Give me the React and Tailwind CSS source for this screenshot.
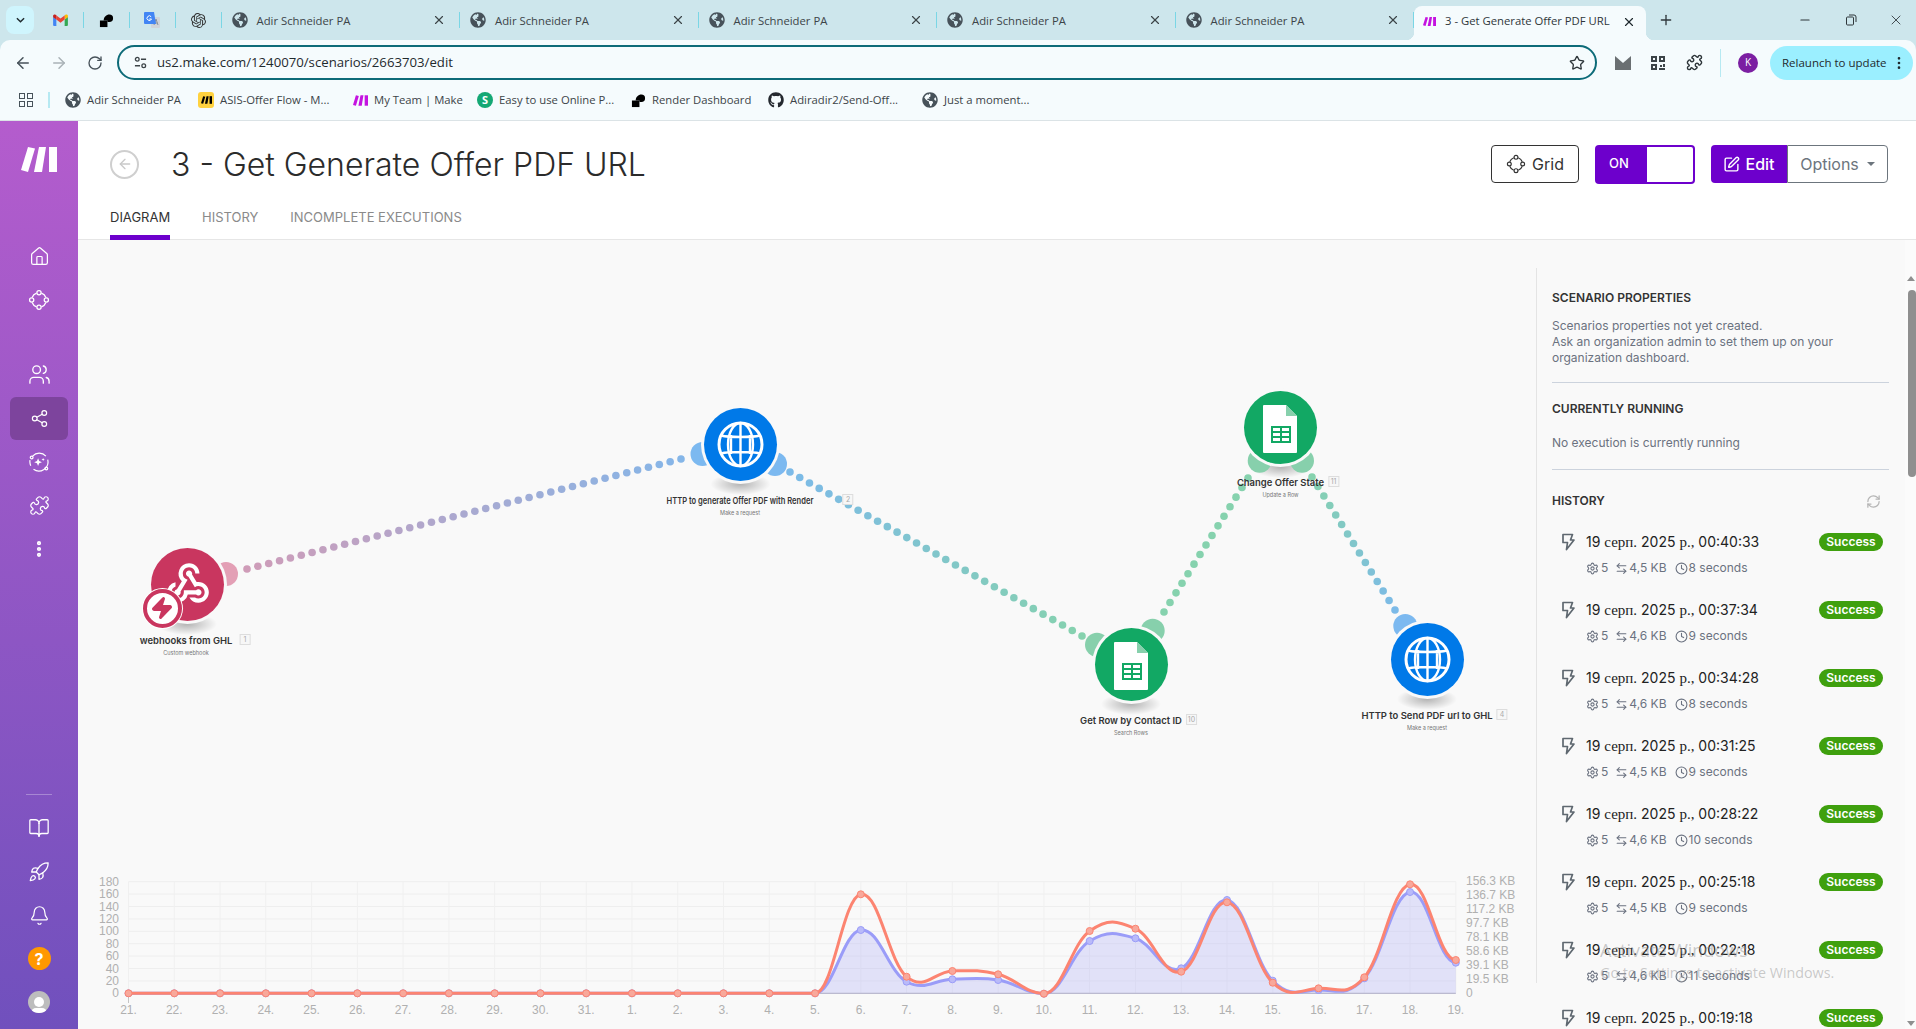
import React from 'react';
import {
  House, Users, Share2, Puzzle, BookOpen, Rocket, Bell, Star, ArrowLeft, ArrowRight,
  RotateCw, X, Plus, Minus, EllipsisVertical, SquarePen, Settings, ArrowLeftRight,
  Clock, RefreshCw, Zap,
} from 'lucide-react';
import { FaGlobeAmericas, FaGithub } from 'react-icons/fa';
import { SiOpenai } from 'react-icons/si';
import { MdWebhook } from 'react-icons/md';

// Browser chrome

const MakeMark = ({ className }) => (
  <svg viewBox="0 0 36 25" className={className} fill="currentColor">
    <polygon points="7,0 14,1.5 7,25 0,23" />
    <polygon points="18,0 25,0 21,25 13,25" />
    <polygon points="28,0 36,0 36,25 28,25" />
  </svg>
);

const RenderMark = () => (
  <svg viewBox="0 0 16 16" className="w-[15px] h-[15px]" fill="#000">
    <rect x="1" y="8" width="8" height="7" />
    <path d="M5 8c0-4 3-6.500 6-6.500a4 4 0 0 1 0 8H9V8z" />
  </svg>
);

const Gmail = () => (
  <svg viewBox="0 0 16 13" className="w-[15px] h-[12px]">
    <path d="M0 3v9a1 1 0 0 0 1 1h2.500V6z" fill="#4285f4" />
    <path d="M16 3v9a1 1 0 0 1-1 1h-2.500V6z" fill="#34a853" />
    <path d="M12.500 1v5L16 3.500V2c0-1.500-1.500-2-2.500-1.200z" fill="#fbbc04" />
    <path d="M3.500 6V1.500L8 5l4.500-3.500V6L8 9.500z" fill="#ea4335" />
    <path d="M0 2v1.500L3.500 6V1l-1-.300C1.500 0 0 .600 0 2z" fill="#c5221f" />
  </svg>
);

const Translate = () => (
  <svg viewBox="0 0 16 16" className="w-[16px] h-[16px]">
    <rect x="7" y="5" width="9" height="11" rx="1" fill="#cfd4da" />
    <path d="M12 7l-2 6M12 7l2 6M10.500 11h3" stroke="#8b9299" strokeWidth="1" fill="none" />
    <path d="M1 0h9l2 12H1a1 1 0 0 1-1-1V1a1 1 0 0 1 1-1z" fill="#4285f4" />
    <path d="M7.200 4.800A2.300 2.300 0 1 0 7.500 7H5.300" fill="none" stroke="#fff" strokeWidth="1" />
  </svg>
);

const Sep = () => <div className="w-px h-[16px] bg-[#7ad6e5] shrink-0" />;

const Pin = ({ children }) => (
  <>
    <div className="w-[45px] flex items-center justify-center shrink-0">{children}</div>
    <Sep />
  </>
);

const Tab = () => (
  <>
    <div className="w-[237.500px] shrink-0 flex items-center pl-[10px] pr-[13px] gap-[9px]">
      <FaGlobeAmericas size={16} className="text-[#47525a] shrink-0" />
      <span className="flex-1 text-[11.300px] leading-[16px] pt-[2px] text-[#3c4448] whitespace-nowrap">Adir Schneider PA</span>
      <X size={14} className="text-[#3c4448] shrink-0" />
    </div>
    <Sep />
  </>
);

const bookmarks = [
  { icon: <FaGlobeAmericas size={16} className="text-[#47525a]" />, label: 'Adir Schneider PA', w: 'w-[133px]' },
  {
    icon: (
      <span className="w-[16px] h-[16px] rounded-[3px] bg-[#ffd23f] flex items-center justify-center">
        <MakeMark className="w-[11px] h-[8px] text-black" />
      </span>
    ),
    label: 'ASIS-Offer Flow - M...',
    w: 'w-[154px]',
  },
  { icon: <MakeMark className="w-[15px] h-[11px] text-[#c413e0]" />, label: 'My Team | Make', w: 'w-[125px]' },
  {
    icon: (
      <span className="w-[16px] h-[16px] rounded-full bg-[#14a874] text-white text-[11px] font-bold flex items-center justify-center">
        S
      </span>
    ),
    label: 'Easy to use Online P...',
    w: 'w-[153px]',
  },
  { icon: <RenderMark />, label: 'Render Dashboard', w: 'w-[138px]' },
  { icon: <FaGithub size={16} className="text-[#24292f]" />, label: 'Adiradir2/Send-Off...', w: 'w-[154px]' },
  { icon: <FaGlobeAmericas size={16} className="text-[#47525a]" />, label: 'Just a moment...', w: 'w-[120px]' },
];

const BrowserChrome = () => (
  <div className="h-[121px] shrink-0 bg-[#cde6ec] font-['Open_Sans',sans-serif] text-[#2f373b]">
    <div className="h-[40px] flex items-center pl-[6px] relative">
      <div className="w-[28px] h-[28px] rounded-lg bg-[#cff5fd] flex items-center justify-center mr-[3.500px] shrink-0">
        <svg viewBox="0 0 10 6" className="w-[9px] h-[6px]" fill="none" stroke="#1f2a2e" strokeWidth="1.600">
          <path d="M1 1l4 4 4-4" />
        </svg>
      </div>
      <Pin><Gmail /></Pin>
      <Pin><RenderMark /></Pin>
      <Pin><Translate /></Pin>
      <Pin><SiOpenai size={15} className="text-[#333]" /></Pin>
      <Tab /><Tab /><Tab /><Tab /><Tab />
      <div className="w-[232px] h-[34px] mt-[6px] pb-[3px] shrink-0 bg-[#f5fbfd] rounded-t-lg flex items-center pl-[9px] pr-[10px] gap-[9px] relative">
        <span className="absolute left-[-8px] bottom-0 w-[8px] h-[8px] bg-[radial-gradient(circle_at_0_0,transparent_8px,#f5fbfd_8.500px)]" />
        <span className="absolute right-[-8px] bottom-0 w-[8px] h-[8px] bg-[radial-gradient(circle_at_100%_0,transparent_8px,#f5fbfd_8.500px)]" />
        <MakeMark className="w-[13px] h-[13px] text-[#c413e0] shrink-0" />
        <span className="flex-1 text-[11.300px] whitespace-nowrap">3 - Get Generate Offer PDF URL</span>
        <X size={14} className="shrink-0 text-[#1f2a2e]" />
      </div>
      <Plus size={16} className="ml-[12px] text-[#2f373b] shrink-0" />
      <div className="ml-auto flex items-center">
        <div className="w-[46px] flex justify-center"><Minus size={14} /></div>
        <div className="w-[46px] flex justify-center">
          <svg viewBox="0 0 12 12" className="w-[12px] h-[12px]" fill="none" stroke="#2f373b" strokeWidth="1">
            <rect x="1.500" y="3" width="7" height="8" rx="1" />
            <path d="M4 1h5a2 2 0 0 1 2 2v5" />
          </svg>
        </div>
        <div className="w-[42px] flex justify-center pl-[2px]"><X size={16} strokeWidth={1.300} /></div>
      </div>
    </div>

    <div className="h-[81px] bg-[#f5fbfd] rounded-t-[10px] border-b border-[#dbe3e6]">
      <div className="h-[40px] pt-[5px] flex items-center pl-[14px] pr-[3px]">
        <ArrowLeft size={18} className="text-[#47525a] shrink-0" />
        <ArrowRight size={18} className="ml-[18px] text-[#a9b2b6] shrink-0" />
        <RotateCw size={16} className="ml-[19px] text-[#47525a] shrink-0" />
        <div className="ml-[14px] w-[1480px] h-[35px] rounded-full border-[2.500px] border-[#0d6b78] flex items-center pl-[15px] pr-[10px] shrink-0">
          <svg viewBox="0 0 14 14" className="w-[13px] h-[13px] shrink-0" fill="none" stroke="#3c4448" strokeWidth="1.400">
            <circle cx="3.500" cy="3.500" r="2" />
            <path d="M7.500 3.500H13M1 10.500h5.500" />
            <circle cx="10.500" cy="10.500" r="2" />
          </svg>
          <span className="ml-[10px] text-[13.200px] text-[#1f2a2e] flex-1">us2.make.com/1240070/scenarios/2663703/edit</span>
          <Star size={16} className="text-[#2f373b]" />
        </div>
        <svg viewBox="0 0 16 14" className="ml-[18px] w-[16px] h-[14px] shrink-0">
          <rect width="16" height="14" fill="#6a6f72" />
          <path d="M0 0l8 7 8-7" fill="#f5fbfd" />
        </svg>
        <svg viewBox="0 0 14 14" className="ml-[20px] w-[14px] h-[14px] shrink-0" fill="#3c4448">
          <path d="M0 0h6v6H0zM8 0h6v6H8zM0 8h6v6H0zM9 9h2v2H9zM12 8h2v3h-2zM8 12h6v2H8z" />
          <path d="M2 2h2v2H2zM10 2h2v2h-2zM2 10h2v2H2z" fill="#f5fbfd" />
        </svg>
        <Puzzle size={17} className="ml-[21px] text-[#2f373b] shrink-0" />
        <div className="w-px h-[28px] bg-[#b6e9f2] ml-[17px] shrink-0" />
        <div className="ml-[17px] w-[20px] h-[20px] rounded-full bg-[#7b1fa2] text-white text-[10px] flex items-center justify-center shrink-0">
          K
        </div>
        <div className="ml-[12px] w-[143px] h-[34px] rounded-full bg-[#9befff] flex items-center pl-[12px] shrink-0">
          <span className="text-[11.500px] text-[#1f2a2e] whitespace-nowrap">Relaunch to update</span>
          <EllipsisVertical size={16} className="ml-auto mr-[6px] text-[#1f2a2e]" />
        </div>
      </div>
      <div className="h-[40px] flex items-center pl-[19px] text-[11.300px] text-[#3c4448]">
        <div className="grid grid-cols-2 gap-[2px] w-[14px] shrink-0">
          <span className="w-[6px] h-[6px] border-[1.500px] border-[#47525a]" />
          <span className="w-[6px] h-[6px] border-[1.500px] border-[#47525a]" />
          <span className="w-[6px] h-[6px] border-[1.500px] border-[#47525a]" />
          <span className="w-[6px] h-[6px] border-[1.500px] border-[#47525a]" />
        </div>
        <div className="w-[2px] h-[16px] bg-[#b6e9f2] ml-[15px] mr-[15px] shrink-0" />
        {bookmarks.map((b) => (
          <div key={b.label} className={`${b.w} flex items-center gap-[6px] shrink-0 whitespace-nowrap`}>
            <span className="w-[16px] flex justify-center shrink-0">{b.icon}</span>
            {b.label}
          </div>
        ))}
      </div>
    </div>
  </div>
);

// Sidebar

const NetworkIcon = ({ size = 22 }) => (
  <svg viewBox="0 0 24 24" width={size} height={size} fill="none" stroke="currentColor" strokeWidth="1.400">
    <circle cx="12" cy="4" r="2.300" />
    <circle cx="12" cy="20" r="2.300" />
    <circle cx="4" cy="12" r="2.300" />
    <circle cx="20" cy="12" r="2.300" />
    <path d="M14.700 4.500A8 8 0 0 1 19.500 9.300M19.500 14.700A8 8 0 0 1 14.700 19.500M9.300 19.500A8 8 0 0 1 4.500 14.700M4.500 9.300A8 8 0 0 1 9.300 4.500" />
  </svg>
);

const AiIcon = () => (
  <svg viewBox="0 0 24 24" width="22" height="22" fill="none" stroke="currentColor" strokeWidth="1.300">
    <path d="M5 5.500a10 10 0 0 1 14.500 0M21.500 9.500A10 10 0 0 1 6 20M3 16a10 10 0 0 1-.800-6" />
    <circle cx="4" cy="7" r="1.500" />
    <circle cx="20" cy="19" r="1.500" />
    <path d="M11 8l1.200 3 3 1.200-3 1.200-1.200 3-1.200-3-3-1.200 3-1.200z" fill="currentColor" stroke="none" />
    <path d="M16.500 7.500l.5 1.300 1.300.5-1.300.5-.5 1.300-.5-1.300-1.300-.5 1.300-.5z" fill="currentColor" stroke="none" />
  </svg>
);

const SideItem = ({ children, active }) => (
  <div className="h-[43.500px] w-full flex items-center justify-center shrink-0 text-white relative">
    {active && <div className="absolute left-[10px] right-[10px] inset-y-0 rounded-md bg-[#7d449d]" />}
    <span className="relative flex">{children}</span>
  </div>
);

const Sidebar = () => (
  <div className="w-[78px] shrink-0 flex flex-col bg-gradient-to-b from-[#b45ccd] to-[#7050bd]">
    <div className="mt-[26px] flex justify-center text-white">
      <MakeMark className="w-[36px] h-[25px]" />
    </div>
    <div className="mt-[63px]">
      <SideItem><House size={21} strokeWidth={1.400} /></SideItem>
      <SideItem><NetworkIcon /></SideItem>
    </div>
    <div className="mt-[31px]">
      <SideItem><Users size={23} strokeWidth={1.400} /></SideItem>
      <SideItem active><Share2 size={19} strokeWidth={1.500} /></SideItem>
      <SideItem><AiIcon /></SideItem>
      <SideItem><Puzzle size={21} strokeWidth={1.400} /></SideItem>
      <SideItem><EllipsisVertical size={20} strokeWidth={3} /></SideItem>
    </div>
    <div className="mt-auto w-[26px] h-px bg-white/30 self-center mb-[12px]" />
    <div className="mb-[5px]">
      <SideItem><BookOpen size={22} strokeWidth={1.400} /></SideItem>
      <SideItem><Rocket size={22} strokeWidth={1.400} /></SideItem>
      <SideItem><Bell size={21} strokeWidth={1.400} /></SideItem>
      <SideItem>
        <span className="w-[23px] h-[23px] rounded-full bg-[#ff9800] text-white text-[16px] font-bold flex items-center justify-center">?</span>
      </SideItem>
      <SideItem>
        <span className="w-[22px] h-[22px] rounded-full bg-[#bdbdbd] flex flex-col items-center justify-end overflow-hidden">
          <span className="w-[10px] h-[10px] rounded-full bg-white mb-[1px]" />
          <span className="w-[16px] h-[5px] rounded-t-full bg-white" />
        </span>
      </SideItem>
    </div>
  </div>
);

// Header

const Header = () => (
  <div className="h-[119px] shrink-0 bg-white border-b border-[#e6e6e6] pl-[32px] pr-[28px] pt-[24px] flex flex-col">
    <div className="flex items-center h-[38px]">
      <div className="w-[29px] h-[29px] rounded-full border-2 border-[#cfcfcf] flex items-center justify-center shrink-0">
        <ArrowLeft size={16} className="text-[#c9c9c9]" />
      </div>
      <h1 className="ml-[32px] text-[32px] leading-[40px] pt-[1px] font-light text-[#2b2b2b] whitespace-nowrap">3 - Get Generate Offer PDF URL</h1>
      <div className="ml-auto flex items-center gap-[16px]">
        <div className="w-[88px] h-[38px] border border-[#333] rounded-[4px] flex items-center justify-center gap-[6px] text-[16px] text-[#333]">
          <NetworkIcon size={20} />
          Grid
        </div>
        <div className="w-[100px] h-[39px] rounded-[4px] bg-[#6d00cc] flex items-center p-[2px] pl-[14px]">
          <span className="text-white text-[13px] font-medium">ON</span>
          <span className="ml-auto w-[46px] h-full bg-white rounded-r-[2px]" />
        </div>
        <div className="flex h-[38px]">
          <div className="w-[76px] bg-[#6d00cc] rounded-l-[4px] flex items-center justify-center gap-[5px] text-white text-[16px] font-medium">
            <SquarePen size={17} />
            Edit
          </div>
          <div className="w-[101px] border border-[#6c757d] rounded-r-[4px] flex items-center justify-center gap-[8px] text-[#6c757d] text-[16px]">
            Options
            <span className="w-0 h-0 border-x-[4px] border-x-transparent border-t-[4px] border-t-[#6c757d]" />
          </div>
        </div>
      </div>
    </div>
    <div className="mt-auto flex gap-[32px] text-[13px] text-[#8a8a8a] -mb-px">
      <div className="h-[32px] border-b-[5px] border-[#6d00cc] text-[#333] w-[60px] whitespace-nowrap">DIAGRAM</div>
      <div className="h-[32px] whitespace-nowrap">HISTORY</div>
      <div className="h-[32px] whitespace-nowrap">INCOMPLETE EXECUTIONS</div>
    </div>
  </div>
);

// Diagram. Coordinates are page pixels, the SVG viewBox lines up with them.

const dots = (x0, y0, x1, y1, n, c0, c1) =>
  Array.from({ length: n }, (_, i) => {
    const t = i / (n - 1);
    const mix = (k) => Math.round(c0[k] + (c1[k] - c0[k]) * t);
    return { x: x0 + (x1 - x0) * t, y: y0 + (y1 - y0) * t, fill: `rgb(${mix(0)},${mix(1)},${mix(2)})` };
  });

const PINK = [207, 156, 184];
const BLUE = [124, 186, 232];
const GREEN = [134, 210, 174];

const allDots = [
  ...dots(247, 569, 681, 459, 41, PINK, [133, 182, 232]),
  ...dots(790, 472, 1082, 636, 31, BLUE, GREEN),
  ...dots(1164, 612, 1248, 478, 15, GREEN, GREEN),
  ...dots(1312, 477, 1395, 610, 15, GREEN, BLUE),
];

const handles = [
  { x: 226, y: 574, fill: '#e39fb5' },
  { x: 702.500, y: 454, fill: '#7cb9f0' },
  { x: 775, y: 464, fill: '#7cb9f0' },
  { x: 1259.700, y: 460.700, fill: '#87d0ac' },
  { x: 1302, y: 460.700, fill: '#87d0ac' },
  { x: 1097, y: 644.700, fill: '#87d0ac' },
  { x: 1152.700, y: 630.700, fill: '#87d0ac' },
  { x: 1405.300, y: 626, fill: '#7cb9f0' },
];

const centers = [[187, 584], [740.500, 444], [1280.700, 427], [1131, 664], [1427, 659]];

const Globe = () => (
  <svg viewBox="0 0 73 73" className="w-full h-full" fill="none" stroke="#fff" strokeWidth="2.400">
    <circle cx="36.500" cy="36.500" r="21.500" strokeWidth="3" />
    <ellipse cx="36.500" cy="36.500" rx="12.500" ry="21.500" />
    <path d="M36.500 15v43M17 27.500c8 2 31 2 39 0M17 45.500c8-2 31-2 39 0M27 27v19M46 27v19" />
  </svg>
);

const Sheet = () => (
  <svg viewBox="0 0 73 73" className="w-full h-full">
    <path d="M20 14h22l11 11v36a1 1 0 0 1-1 1H20a1 1 0 0 1-1-1V15a1 1 0 0 1 1-1z" fill="#fff" />
    <path d="M42 14l11 11H42z" fill="#87d0ac" />
    <rect x="27" y="35" width="20" height="17" fill="#12a864" />
    <path d="M29 37h7v3h-7zM38 37h7v3h-7zM29 42h7v3h-7zM38 42h7v3h-7zM29 47h7v3h-7zM38 47h7v3h-7z" fill="#fff" />
  </svg>
);

const DiagramNode = ({ className, children }) => (
  <div className={`absolute w-[73px] h-[73px] rounded-full ring-[3px] ring-[#f9f9f9] ${className}`}>{children}</div>
);

const NodeLabel = ({ className, name, sub, num, numClass, nameClass = '' }) => (
  <div className={`absolute -translate-x-1/2 text-center whitespace-nowrap leading-none ${className}`}>
    <div className="relative text-[9.450px] font-semibold text-[#333] leading-[12px]">
      <span className={`inline-block ${nameClass}`}>{name}</span>
      <span className={`absolute top-[-1px] w-[11px] h-[11px] border border-[#ddd] bg-[#f7f7f7] text-[7px] font-normal text-[#aaa] leading-[9px] ${numClass}`}>
        {num}
      </span>
    </div>
    <div className="text-[5.500px] text-[#777] mt-[2px] leading-[8px]">{sub}</div>
  </div>
);

const Diagram = () => (
  <div className="relative flex-1">
    <svg viewBox="78 240 1458 630" className="absolute inset-0 w-[1458px] h-[630px]">
      <defs>
        <radialGradient id="nodeShadow">
          <stop offset="0" stopColor="#000" stopOpacity="0.280" />
          <stop offset="1" stopColor="#000" stopOpacity="0" />
        </radialGradient>
      </defs>
      {centers.map(([x, y]) => (
        <ellipse key={x} cx={x} cy={y + 40} rx="30" ry="11" fill="url(#nodeShadow)" />
      ))}
      {allDots.map((d, i) => (
        <circle key={i} cx={d.x} cy={d.y} r="3.800" fill={d.fill} />
      ))}
      {handles.map((h) => (
        <circle key={h.x} cx={h.x} cy={h.y} r="12" fill={h.fill} />
      ))}
    </svg>

    <DiagramNode className="left-[72.500px] top-[307.500px] bg-[#c9365f]">
      <div className="absolute inset-0 flex items-center justify-center text-white pb-[1px] pl-[2px]">
        <MdWebhook size={50} />
      </div>
      <div className="absolute left-[-8px] top-[41px] w-[39px] h-[39px] rounded-full border-[4px] border-[#c9365f] bg-white ring-1 ring-white flex items-center justify-center">
        <Zap size={24} className="text-[#c9365f]" fill="#c9365f" />
      </div>
    </DiagramNode>
    <DiagramNode className="left-[626px] top-[167.500px] bg-[#0079e8]"><Globe /></DiagramNode>
    <DiagramNode className="left-[1166.200px] top-[150.500px] bg-[#12a864]"><Sheet /></DiagramNode>
    <DiagramNode className="left-[1016.500px] top-[387.500px] bg-[#12a864]"><Sheet /></DiagramNode>
    <DiagramNode className="left-[1312.500px] top-[382.500px] bg-[#0079e8]"><Globe /></DiagramNode>

    <NodeLabel className="left-[108px] top-[395px]" name="webhooks from GHL" sub="Custom webhook" num="1" numClass="left-[calc(100%+7px)]" />
    <NodeLabel className="left-[662px] top-[255px]" name="HTTP to generate Offer PDF with Render" nameClass="scale-x-[0.800]" sub="Make a request" num="2" numClass="left-[calc(100%+11px)]" />
    <NodeLabel className="left-[1202.500px] top-[237px]" name="Change Offer State" sub="Update a Row" num="11" numClass="left-[calc(100%+4px)]" />
    <NodeLabel className="left-[1053px] top-[475px]" name="Get Row by Contact ID" sub="Search Rows" num="10" numClass="left-[calc(100%+4px)]" />
    <NodeLabel className="left-[1349px] top-[470px]" name="HTTP to Send PDF url to GHL" sub="Make a request" num="4" numClass="left-[calc(100%+4px)]" />
  </div>
);

// Chart

const X0 = 128.500;
const STEP = 45.770;
const Y0 = 993.300;
const GRID = 12.400;

const zeros = Array(16).fill(Y0);
const orange = [...zeros, 894.300, 976.700, 971, 974.300, 993.700, 931, 928.700, 971.700, 902.300, 982.700, 988.300, 977.300, 884.300, 960];
const violet = [...zeros, 930, 981.700, 979.300, 980, 993.700, 941, 938.300, 968.300, 900, 980.700, 990, 978.300, 892, 962.700];

const xLabels = [
  '21.', '22.', '23.', '24.', '25.', '26.', '27.', '28.', '29.', '30.', '31.', '1.', '2.', '3.', '4.', '5.',
  '6.', '7.', '8.', '9.', '10.', '11.', '12.', '13.', '14.', '15.', '16.', '17.', '18.', '19.',
];
const leftLabels = ['180', '160', '140', '120', '100', '80', '60', '40', '20', '0'];
const rightLabels = ['156.3 KB', '136.7 KB', '117.2 KB', '97.7 KB', '78.1 KB', '58.6 KB', '39.1 KB', '19.5 KB', '0'];

// spline tangents run parallel to the neighbours' chord; points on the baseline stay flat
const spline = (ys) => {
  const px = (i) => X0 + i * STEP;
  const slope = (i) => {
    if (i === 0 || i === ys.length - 1 || ys[i] >= Y0 - 0.500) return 0;
    return (ys[i + 1] - ys[i - 1]) / (2 * STEP);
  };
  const arm = STEP * 0.400;
  let d = `M${px(0)} ${ys[0]}`;
  for (let i = 1; i < ys.length; i++) {
    const c1y = ys[i - 1] + slope(i - 1) * arm;
    const c2y = ys[i] - slope(i) * arm;
    d += ` C${px(i - 1) + arm} ${c1y} ${px(i) - arm} ${c2y} ${px(i)} ${ys[i]}`;
  }
  return d;
};

const Chart = () => {
  const violetLine = spline(violet);
  const orangeLine = spline(orange);
  const xEnd = X0 + 29 * STEP;
  return (
    <svg viewBox="78 870 1458 159" className="w-[1458px] h-[159px] shrink-0 font-['Liberation_Sans',sans-serif]">
      {leftLabels.map((l, i) => (
        <g key={l}>
          <line x1={X0} x2={xEnd} y1={881.700 + i * GRID} y2={881.700 + i * GRID} stroke="#eeeeee" />
          <text x="119" y={885.700 + i * GRID} textAnchor="end" fontSize="12" fill="#b0b0b0">{l}</text>
        </g>
      ))}
      {xLabels.map((l, i) => (
        <g key={l}>
          <line x1={X0 + i * STEP} x2={X0 + i * STEP} y1="881.700" y2={Y0} stroke="#f0f0f0" />
          <text x={X0 + i * STEP} y="1014" textAnchor="middle" fontSize="12" fill="#b0b0b0">{l}</text>
        </g>
      ))}
      {rightLabels.map((l, i) => (
        <text key={l} x="1466" y={884.700 + i * 14} fontSize="12" fill="#b0b0b0">{l}</text>
      ))}
      <line x1={X0} x2={X0} y1={Y0} y2="1003" stroke="#c4c4c4" />
      <path d={`${violetLine} L${xEnd} ${Y0} L${X0} ${Y0} Z`} fill="#9a9cf8" fillOpacity="0.250" />
      <line x1={X0} x2={xEnd} y1={Y0} y2={Y0} stroke="#b0aec8" />
      <path d={violetLine} fill="none" stroke="#9a9cf8" strokeWidth="3" />
      {violet.map((y, i) => (
        <circle key={i} cx={X0 + i * STEP} cy={y} r="3.500" fill="#b9baf9" stroke="#9a9cf8" />
      ))}
      <path d={orangeLine} fill="none" stroke="#fc8471" strokeWidth="3" />
      {orange.map((y, i) => (
        <circle key={i} cx={X0 + i * STEP} cy={y} r="3.500" fill="#f8a89b" stroke="#fc8471" />
      ))}
    </svg>
  );
};

// Right panel

const runs = [
  ['00:40:33', '4,5 KB', '8 seconds'],
  ['00:37:34', '4,6 KB', '9 seconds'],
  ['00:34:28', '4,6 KB', '8 seconds'],
  ['00:31:25', '4,5 KB', '9 seconds'],
  ['00:28:22', '4,6 KB', '10 seconds'],
  ['00:25:18', '4,5 KB', '9 seconds'],
  ['00:22:18', '4,6 KB', '11 seconds'],
  ['00:19:18'],
];

const Serif = ({ children }) => <span className="font-['Liberation_Serif',serif] text-[15px]">{children}</span>;

const RunRow = ({ time, size, took }) => (
  <div className="mb-[24px] flex pl-[9px] pr-[6px] shrink-0">
    <svg viewBox="0 0 14 18" className="w-[14px] h-[18px] mt-[1px] shrink-0" fill="none" stroke="#5f6870" strokeWidth="1.700" strokeLinejoin="round">
      <path d="M2 1.500h9.500l-2 5.500h3.500L5.500 16.500l1-7H2z" />
    </svg>
    <div className="ml-[11px] flex-1">
      <div className="h-[20px] flex items-center justify-between">
        <span className="text-[14px] text-[#222] whitespace-nowrap">
          19 <Serif>серп.</Serif> 2025 <Serif>р.,</Serif> {time}
        </span>
        <span className="w-[64px] h-[18px] rounded-full bg-[#3fa00e] text-white text-[12px] font-semibold flex items-center justify-center">
          Success
        </span>
      </div>
      {size && (
        <div className="mt-[8px] h-[16px] flex items-center text-[12px] text-[#6b7280]">
          <Settings size={13} className="shrink-0" />
          <span className="ml-[2px]">5</span>
          <ArrowLeftRight size={13} className="ml-[7px] shrink-0" />
          <span className="ml-[1px]">{size}</span>
          <Clock size={13} className="ml-[8px] shrink-0" />
          <span className="ml-[1px]">{took}</span>
        </div>
      )}
    </div>
  </div>
);

const Panel = () => (
  <div className="w-[380px] shrink-0 flex overflow-hidden">
    <div className="w-px h-[715px] mt-[28px] bg-[#e4e4e4] shrink-0" />
    <div className="w-[337px] ml-[15px] pt-[50px] shrink-0 text-[12px] text-[#6b7280]">
      <h2 className="h-[16px] leading-[16px] font-semibold text-[#333]">SCENARIO PROPERTIES</h2>
      <p className="mt-[12px] leading-[16px]">
        Scenarios properties not yet created.
        <br />
        Ask an organization admin to set them up on your
        <br />
        organization dashboard.
      </p>
      <div className="mt-[16px] h-px bg-[#ccd3dd]" />
      <h2 className="mt-[18px] h-[16px] leading-[16px] font-semibold text-[#333]">CURRENTLY RUNNING</h2>
      <p className="mt-[18px] leading-[16px]">No execution is currently running</p>
      <div className="mt-[18px] h-px bg-[#ccd3dd]" />
      <div className="mt-[23px] h-[16px] flex items-center justify-between">
        <h2 className="font-semibold text-[#333]">HISTORY</h2>
        <RefreshCw size={15} className="text-[#b5b5b5] mr-[8px]" />
      </div>
      <div className="mt-[23px]">
        {runs.map((r) => (
          <RunRow key={r[0]} time={r[0]} size={r[1]} took={r[2]} />
        ))}
      </div>
    </div>
    <div className="ml-auto w-[11px] h-full bg-[#fbfbfb] shrink-0 relative">
      <span className="absolute right-[1px] top-[36px] w-0 h-0 border-x-[4px] border-x-transparent border-b-[5px] border-b-[#8f8f8f]" />
      <span className="absolute right-0 top-[50px] w-[8px] h-[187px] rounded-[4px] bg-[#8f8f8f]" />
      <span className="absolute right-[1px] bottom-[3px] w-0 h-0 border-x-[4px] border-x-transparent border-t-[5px] border-t-[#8f8f8f]" />
    </div>
  </div>
);

export default function App() {
  return (
    <div className="relative w-[1916px] h-[1029px] overflow-hidden flex flex-col bg-white font-['Inter',sans-serif]">
      <BrowserChrome />
      <div className="flex flex-1 min-h-0">
        <Sidebar />
        <div className="flex-1 flex flex-col min-w-0">
          <Header />
          <div className="flex-1 flex min-h-0 bg-[#f9f9f9]">
            <div className="w-[1458px] shrink-0 flex flex-col">
              <Diagram />
              <Chart />
            </div>
            <Panel />
          </div>
        </div>
      </div>
      {/* Windows activation watermark sits over the page */}
      <div className="absolute left-[1600px] top-[938px] text-[#8c8c8c]/45 font-['Open_Sans',sans-serif] pointer-events-none">
        <div className="text-[18px] leading-[24px]">Activate Windows</div>
        <div className="text-[14.300px] leading-[20px] mt-[1px]">Go to Settings to activate Windows.</div>
      </div>
    </div>
  );
}
